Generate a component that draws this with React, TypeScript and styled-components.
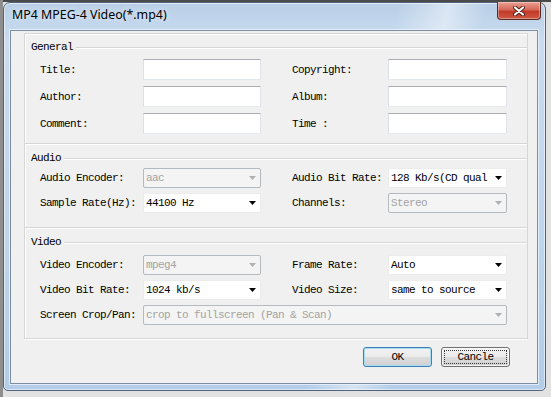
import styled, { createGlobalStyle, css } from "styled-components";

const mono = `"Liberation Mono", "DejaVu Sans Mono", monospace`;

const GlobalStyle = createGlobalStyle`
  html, body { margin: 0; padding: 0; }
  body { width: 551px; height: 397px; overflow: hidden; background: #d4d4d4; }
`;

const Desktop = styled.div`
  width: 551px;
  height: 397px;
  box-sizing: border-box;
  padding: 2px 5px 6px 3px;
  display: flex;
  background:
    linear-gradient(to right, #8e8e8e 0 3px, transparent 3px),
    linear-gradient(to bottom, #4a4a4a 0 2px, #e2e2e2 2px);
`;

const Window = styled.div`
  flex: 1;
  display: flex;
  flex-direction: column;
  border: 1px solid #50637a;
  border-radius: 7px 7px 5px 5px;
  padding: 0 7px 6px 6px;
  box-shadow: inset 0 0 0 1px rgba(255, 255, 255, 0.55);
  background:
    linear-gradient(104deg, transparent 62%, rgba(255, 255, 255, 0.45) 70%, transparent 76%),
    linear-gradient(to bottom, #b9cfe7 0%, #c9dcf0 10%, #bfd5ec 60%, #b3cde8 100%);
`;

const TitleBar = styled.div`
  height: 27px;
  display: flex;
  align-items: flex-start;
`;

const TitleText = styled.div`
  padding: 4px 0 0 2px;
  font-family: "Noto Sans", "Open Sans", sans-serif;
  font-size: 12.4px;
  line-height: 16px;
  color: #000;
  text-shadow: 0 0 6px rgba(255, 255, 255, 0.9);
`;

const CloseButton = styled.div`
  margin: -1px -3px 0 auto;
  width: 44px;
  height: 18px;
  box-sizing: border-box;
  border: 1px solid #5b2a22;
  border-top: none;
  border-radius: 0 0 4px 4px;
  display: flex;
  align-items: center;
  justify-content: center;
  background: linear-gradient(to bottom, #eaa091 0%, #d6695a 45%, #c13a28 55%, #cf5a44 100%);
  box-shadow: inset 0 0 0 1px rgba(255, 255, 255, 0.35);
`;

const Client = styled.div`
  flex: 1;
  display: flex;
  flex-direction: column;
  background: #f0f0f0;
  border: 1px solid #7d8ea3;
  box-shadow: 0 0 0 1px rgba(235, 244, 252, 0.8);
`;

const Panel = styled.div`
  margin: 2px 9px 0 13px;
  border: 1px solid #d6d6d6;
  border-bottom: none;
  box-shadow: inset 1px 1px 0 #fff;
`;

const Group = styled.div<{ $mt: number; $pb: number }>`
  margin-top: ${(p) => p.$mt}px;
  padding-bottom: ${(p) => p.$pb}px;
  border-bottom: 1px solid #d6d6d6;
  box-shadow: 0 1px 0 #fff;
`;

const Legend = styled.div`
  height: 12px;
  display: flex;
  align-items: center;
  gap: 3px;
  padding-left: 6px;
  font-family: ${mono};
  font-size: 11px;
  letter-spacing: -0.6px;
  color: #000;
`;

const LegendRule = styled.div`
  flex: 1;
  height: 1px;
  background: #d6d6d6;
  box-shadow: 0 1px 0 #fff;
`;

const Rows = styled.div<{ $mt: number; $gap: number; $h: number }>`
  display: grid;
  grid-template-columns: 103px 118px 127px 119px;
  grid-auto-rows: ${(p) => p.$h}px;
  row-gap: ${(p) => p.$gap}px;
  margin-top: ${(p) => p.$mt}px;
  padding-left: 15px;
`;

const Label = styled.div<{ $right?: boolean }>`
  display: flex;
  align-items: center;
  padding-left: ${(p) => (p.$right ? 31 : 0)}px;
  white-space: nowrap;
  font-family: ${mono};
  font-size: 11px;
  letter-spacing: -0.6px;
  color: #000;
`;

const TextBox = styled.input`
  box-sizing: border-box;
  width: 100%;
  height: 100%;
  margin: 0;
  padding: 0 2px;
  background: #fff;
  border: 1px solid;
  border-color: #abadb3 #e2e3ea #e3e9ef #dbdfe6;
  border-radius: 1px;
  outline: none;
  font-family: ${mono};
  font-size: 11px;
`;

const Combo = styled.div<{ $disabled?: boolean; $span?: boolean }>`
  box-sizing: border-box;
  height: 100%;
  display: flex;
  align-items: center;
  overflow: hidden;
  ${(p) => p.$span && css`grid-column: 2 / -1;`}
  ${(p) =>
    p.$disabled
      ? css`
          background: #f4f4f4;
          border: 1px solid #b5babf;
          border-radius: 2px;
          color: #a3a3a3;
        `
      : css`
          background: #fff;
          border: 1px solid #ececec;
          color: #000;
        `}
`;

const ComboValue = styled.div`
  flex: 1;
  min-width: 0;
  white-space: nowrap;
  padding-left: 2px;
  font-family: ${mono};
  font-size: 11px;
  letter-spacing: -0.6px;
`;

const ComboArrow = styled.div`
  width: 16px;
  flex: none;
  display: flex;
  align-items: center;
  justify-content: center;
`;

const ButtonBar = styled.div`
  display: flex;
  justify-content: flex-end;
  gap: 9px;
  margin: 8px 27px 0 0;
`;

const DialogButton = styled.div<{ $default?: boolean }>`
  width: 69px;
  height: 20px;
  box-sizing: border-box;
  display: flex;
  align-items: center;
  justify-content: center;
  border-radius: 3px;
  font-family: ${mono};
  font-size: 11px;
  letter-spacing: -0.6px;
  color: #000;
  background: linear-gradient(to bottom, #f2f2f2 0%, #ebebeb 48%, #dddddd 52%, #cfcfcf 100%);
  ${(p) =>
    p.$default
      ? css`
          border: 1px solid #3c7fb1;
          box-shadow: inset 0 0 0 1px #a6dcf6;
        `
      : css`
          border: 1px solid #707070;
          box-shadow: inset 0 0 0 1px rgba(255, 255, 255, 0.7);
          outline: 1px dotted #3a3a3a;
          outline-offset: -4px;
        `}
`;

const Arrow = ({ disabled }: { disabled?: boolean }) => (
  <svg width="7" height="4" viewBox="0 0 7 4">
    <path d="M0 0h7L3.5 4z" fill={disabled ? "#b0b0b0" : "#000"} />
  </svg>
);

const Select = ({ value, disabled, span }: { value: string; disabled?: boolean; span?: boolean }) => (
  <Combo $disabled={disabled} $span={span}>
    <ComboValue>{value}</ComboValue>
    <ComboArrow>
      <Arrow disabled={disabled} />
    </ComboArrow>
  </Combo>
);

export default function App() {
  return (
    <>
      <GlobalStyle />
      <Desktop>
        <Window>
          <TitleBar>
            <TitleText>MP4 MPEG-4 Video(*.mp4)</TitleText>
            <CloseButton>
              <svg width="12" height="10" viewBox="0 0 12 10">
                <path d="M2 1.5l8 7M10 1.5l-8 7" stroke="#4a1c14" strokeWidth="4" strokeLinecap="round" />
                <path d="M2 1.5l8 7M10 1.5l-8 7" stroke="#fff" strokeWidth="2.2" strokeLinecap="round" />
              </svg>
            </CloseButton>
          </TitleBar>
          <Client>
            <Panel>
              <Group $mt={7} $pb={9}>
                <Legend>
                  General
                  <LegendRule />
                </Legend>
                <Rows $mt={6} $gap={6} $h={21}>
                  <Label>Title:</Label>
                  <TextBox readOnly />
                  <Label $right>Copyright:</Label>
                  <TextBox readOnly />
                  <Label>Author:</Label>
                  <TextBox readOnly />
                  <Label $right>Album:</Label>
                  <TextBox readOnly />
                  <Label>Comment:</Label>
                  <TextBox readOnly />
                  <Label $right>Time :</Label>
                  <TextBox readOnly />
                </Rows>
              </Group>
              <Group $mt={8} $pb={14}>
                <Legend>
                  Audio
                  <LegendRule />
                </Legend>
                <Rows $mt={4} $gap={5} $h={20}>
                  <Label>Audio Encoder:</Label>
                  <Select value="aac" disabled />
                  <Label $right>Audio Bit Rate:</Label>
                  <Select value="128 Kb/s(CD qual" />
                  <Label>Sample Rate(Hz):</Label>
                  <Select value="44100 Hz" />
                  <Label $right>Channels:</Label>
                  <Select value="Stereo" disabled />
                </Rows>
              </Group>
              <Group $mt={8} $pb={13}>
                <Legend>
                  Video
                  <LegendRule />
                </Legend>
                <Rows $mt={7} $gap={5} $h={20}>
                  <Label>Video Encoder:</Label>
                  <Select value="mpeg4" disabled />
                  <Label $right>Frame Rate:</Label>
                  <Select value="Auto" />
                  <Label>Video Bit Rate:</Label>
                  <Select value="1024 kb/s" />
                  <Label $right>Video Size:</Label>
                  <Select value="same to source" />
                  <Label>Screen Crop/Pan:</Label>
                  <Select value="crop to fullscreen (Pan & Scan)" disabled span />
                </Rows>
              </Group>
            </Panel>
            <ButtonBar>
              <DialogButton $default>OK</DialogButton>
              <DialogButton>Cancle</DialogButton>
            </ButtonBar>
          </Client>
        </Window>
      </Desktop>
    </>
  );
}
